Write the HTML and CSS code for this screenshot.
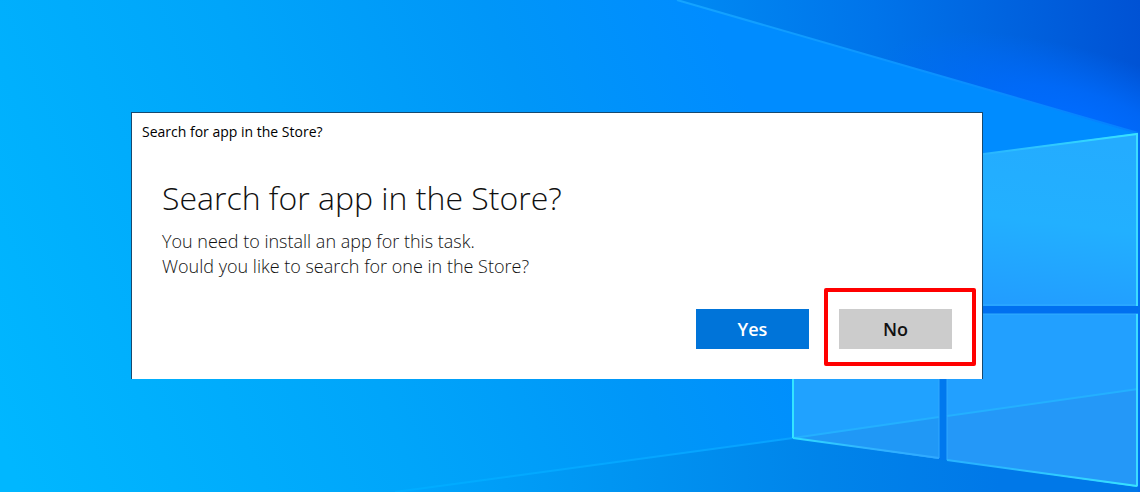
FILE: index.html
```
<!DOCTYPE html>
<html lang="en">
<head>
<meta charset="utf-8">
<meta name="viewport" content="width=device-width, initial-scale=1">
<title>Search for app in the Store?</title>
<link rel="stylesheet" href="styles.css">
</head>
<body>
<svg class="wallpaper" viewBox="0 0 1140 492" preserveAspectRatio="none" aria-hidden="true">
  <defs>
    <linearGradient id="sky" gradientUnits="userSpaceOnUse" x1="0" y1="440" x2="760" y2="130">
      <stop offset="0" stop-color="#00b7ff"/>
      <stop offset=".45" stop-color="#00a5fa"/>
      <stop offset=".75" stop-color="#0096f8"/>
      <stop offset="1" stop-color="#008cff"/>
    </linearGradient>
    <linearGradient id="dusk" gradientUnits="userSpaceOnUse" x1="700" y1="40" x2="1140" y2="0">
      <stop offset="0" stop-color="#0088f2"/>
      <stop offset=".4" stop-color="#0074ea"/>
      <stop offset="1" stop-color="#0052d4"/>
    </linearGradient>
    <radialGradient id="glow" gradientUnits="userSpaceOnUse" cx="0" cy="0" r="1" gradientTransform="translate(1080 120) rotate(16) scale(210 70)">
      <stop offset="0" stop-color="#006cff"/>
      <stop offset=".4" stop-color="#006cff" stop-opacity=".75"/>
      <stop offset="1" stop-color="#006cff" stop-opacity="0"/>
    </radialGradient>
    <linearGradient id="floor" gradientUnits="userSpaceOnUse" x1="400" y1="492" x2="1000" y2="470">
      <stop offset="0" stop-color="#00a5fc"/>
      <stop offset=".35" stop-color="#0095f2"/>
      <stop offset=".7" stop-color="#0084ea"/>
      <stop offset="1" stop-color="#0078e8"/>
    </linearGradient>
    <linearGradient id="ray" gradientUnits="userSpaceOnUse" x1="680" y1="0" x2="1138" y2="133">
      <stop offset="0" stop-color="#14a4ff"/>
      <stop offset=".5" stop-color="#0c94ff"/>
      <stop offset="1" stop-color="#0480ff"/>
    </linearGradient>
    <linearGradient id="low-ray" gradientUnits="userSpaceOnUse" x1="395" y1="492" x2="793" y2="437">
      <stop offset="0" stop-color="#00adff"/>
      <stop offset="1" stop-color="#08a2ff"/>
    </linearGradient>
    <linearGradient id="pane" gradientUnits="userSpaceOnUse" x1="1040" y1="135" x2="1020" y2="305">
      <stop offset="0" stop-color="#24acff"/>
      <stop offset=".5" stop-color="#22b0ff"/>
      <stop offset="1" stop-color="#229dff"/>
    </linearGradient>
    <linearGradient id="edge" gradientUnits="userSpaceOnUse" x1="983" y1="0" x2="1138" y2="0">
      <stop offset="0" stop-color="#28b4ff"/>
      <stop offset="1" stop-color="#38e4ff"/>
    </linearGradient>
    <linearGradient id="base-edge" gradientUnits="userSpaceOnUse" x1="793" y1="0" x2="940" y2="0">
      <stop offset="0" stop-color="#30dcff"/>
      <stop offset=".5" stop-color="#30b4ff"/>
      <stop offset="1" stop-color="#30a8ff"/>
    </linearGradient>
  </defs>
  <rect width="1140" height="492" fill="url(#sky)"/>
  <path d="M677 0H1140V134Z" fill="url(#dusk)"/>
  <path d="M677 0H1140V134Z" fill="url(#glow)"/>
  <path d="M677 0L1138 133" stroke="url(#ray)" stroke-width="2"/>
  <path d="M395 492L793 438L1140 388V492Z" fill="url(#floor)"/>
  <path d="M395 492L793 438" stroke="url(#low-ray)" stroke-width="2"/>
  <path d="M938 370H950V460H938Z" fill="#0078ee"/>
  <path d="M1138 132H1140V492H1138Z" fill="#006ef0"/>
  <path d="M900 165L1138 133V306H900Z" fill="url(#pane)"/>
  <path d="M900 306H1140V314H900Z" fill="#0070f0"/>
  <path d="M947 314H1138V487L947 460Z" fill="#22a0ff"/>
  <path d="M793 370H939V459L793 438Z" fill="#20a2ff"/>
  <path d="M947 416L1138 389V487L947 460Z" fill="#2498f8"/>
  <path d="M793 438L939 417V459Z" fill="#2098f6"/>
  <path d="M793 438L939 417M947 416L1138 389" fill="none" stroke="#24b0ff" stroke-width="2"/>
  <path d="M939 370V458M947 370V460" fill="none" stroke="#30a9ff" stroke-width="1"/>
  <path d="M983 305H1138M983 314H1138" fill="none" stroke="#30adff" stroke-width="1"/>
  <path d="M900 165L1137 134" fill="none" stroke="url(#edge)" stroke-width="2"/>
  <path d="M1137 133V306M1137 314V486" fill="none" stroke="#3cdcff" stroke-width="2"/>
  <path d="M793 370V438" fill="none" stroke="#34e4ff" stroke-width="2"/>
  <path d="M793 438L939 458" fill="none" stroke="url(#base-edge)" stroke-width="2"/>
  <path d="M947 460L1137 486" fill="none" stroke="url(#edge)" stroke-width="2"/>
</svg>
<main class="desktop">
  <section class="dialog" role="dialog" aria-labelledby="dialog-heading">
    <header class="titlebar">Search for app in the Store?</header>
    <div class="content">
      <h1 class="heading" id="dialog-heading">Search for app in the Store?</h1>
      <p class="message">You need to install an app for this task.<br>Would you like to search for one in the Store?</p>
      <div class="actions">
        <button class="button button-primary" type="button">Yes</button>
        <div class="marked">
          <button class="button" type="button">No</button>
        </div>
      </div>
    </div>
  </section>
</main>
</body>
</html>
```
FILE: styles.css
```
* {
  box-sizing: border-box;
}

body {
  margin: 0;
  min-height: 100vh;
  background: #00a4fa;
  font-family: "Open Sans", "Noto Sans", sans-serif;
  color: #111;
}

.wallpaper {
  position: fixed;
  inset: 0;
  width: 100%;
  height: 100%;
}

.desktop {
  position: relative;
  padding: 112px 157px 0 131px;
}

.dialog {
  background: #fff;
  border: 1px solid #17496f;
  border-bottom: 0;
}

.titlebar {
  padding: 9px 10px;
  font-size: 14px;
  line-height: 20px;
  color: #000;
}

.content {
  padding: 24px 30px 30px;
}

.heading {
  margin: 0;
  font-size: 32px;
  font-weight: 330;
  line-height: 46px;
}

.message {
  margin: 8px 0 0;
  font-size: 18px;
  font-weight: 330;
  line-height: 25px;
}

.actions {
  display: flex;
  justify-content: flex-end;
  gap: 30px;
  margin-top: 30px;
}

.button {
  display: block;
  width: 113px;
  height: 40px;
  padding: 0;
  border: 0;
  background: #ccc;
  color: #111;
  font-family: inherit;
  font-size: 18px;
  font-weight: 600;
}

.button-primary {
  background: #0074d9;
  color: #fff;
}

.marked {
  position: relative;
}

/* Red frame drawn round the recommended choice */
.marked::after {
  content: "";
  position: absolute;
  inset: -21px -24px -17px -15px;
  border: 4px solid #f00;
  border-radius: 2px;
  pointer-events: none;
}
```
